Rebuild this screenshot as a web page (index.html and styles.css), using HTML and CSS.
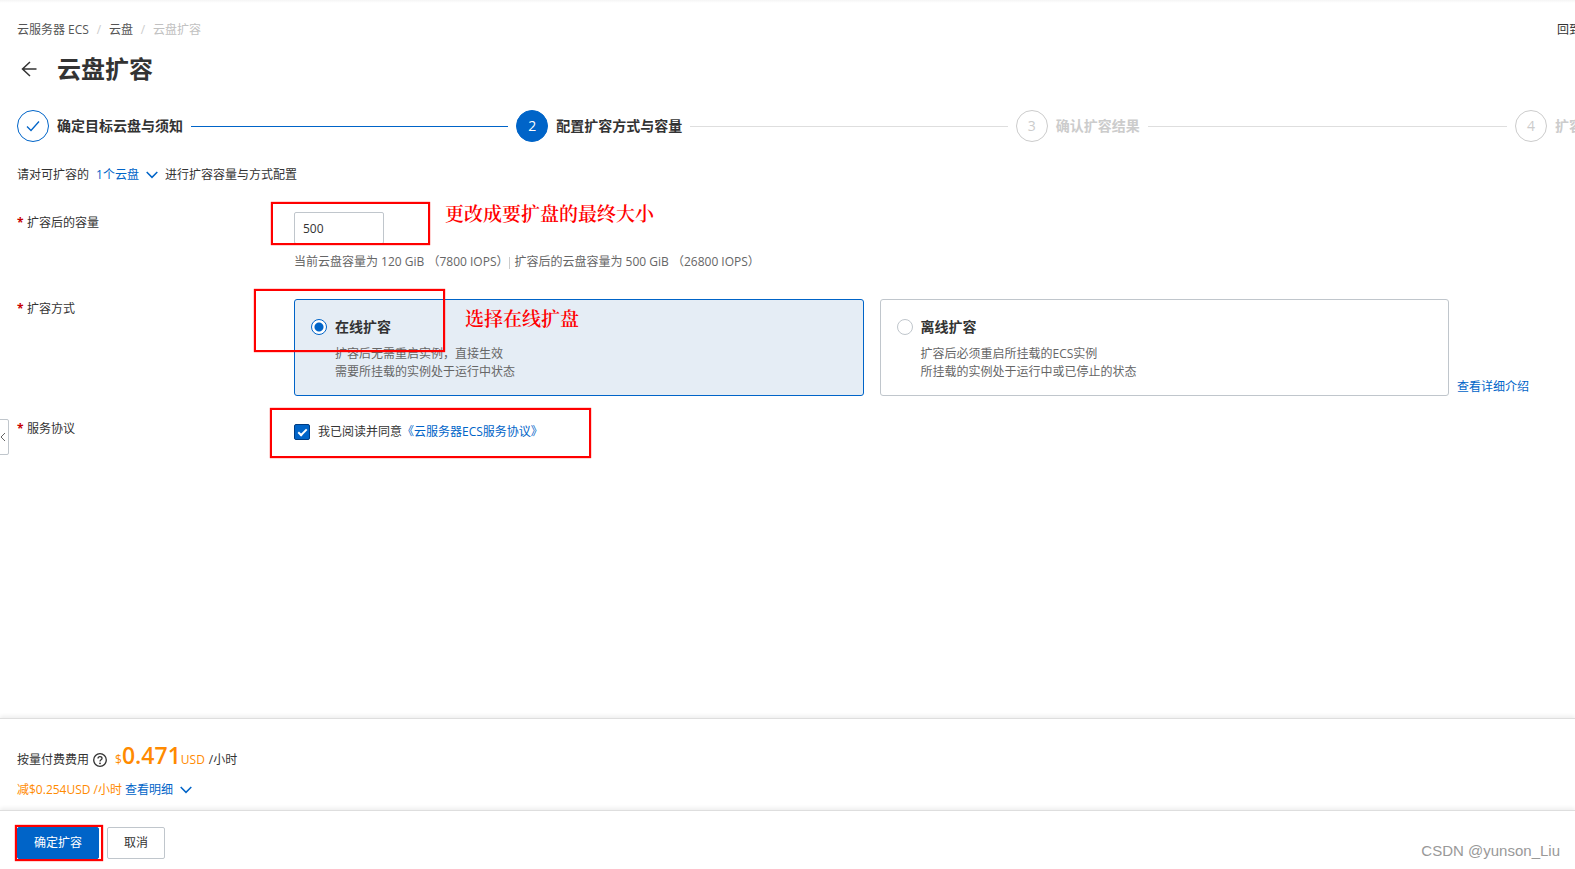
FILE: index.html
```html
<!DOCTYPE html>
<html lang="zh-CN">
<head>
<meta charset="utf-8">
<title>云盘扩容</title>
<link rel="stylesheet" href="styles.css">
</head>
<body>
<button class="drawer-handle" type="button" aria-label="展开">
  <svg width="6" height="10" viewBox="0 0 6 10"><path d="M5 1 1 5l4 4" fill="none" stroke="currentColor"/></svg>
</button>
<main class="page">
  <header class="topbar">
    <nav class="breadcrumb">
      <a href="#">云服务器 ECS</a><span class="slash">/</span><a href="#">云盘</a><span class="slash">/</span><span class="current">云盘扩容</span>
    </nav>
    <a class="old-version" href="#">回到旧版</a>
  </header>
  <div class="title-row">
    <a class="back" href="#" aria-label="返回">
      <svg width="16" height="16" viewBox="0 0 16 16"><path d="M15.5 8H1.5M9 1 1.5 8 9 15" fill="none" stroke="currentColor" stroke-width="1.5"/></svg>
    </a>
    <h1>云盘扩容</h1>
  </div>
  <ol class="steps">
    <li class="step done">
      <span class="dot"><svg width="14" height="12" viewBox="0 0 14 12"><path d="M1 6.5 5 10.5 13 1.5" fill="none" stroke="currentColor" stroke-width="1.3"/></svg></span>
      <span class="step-title">确定目标云盘与须知</span><span class="line"></span>
    </li>
    <li class="step active"><span class="dot">2</span><span class="step-title">配置扩容方式与容量</span><span class="line"></span></li>
    <li class="step"><span class="dot">3</span><span class="step-title">确认扩容结果</span><span class="line"></span></li>
    <li class="step"><span class="dot">4</span><span class="step-title">扩容完成</span></li>
  </ol>
  <p class="intro">请对可扩容的
    <a href="#">1个云盘<svg width="12" height="8" viewBox="0 0 12 8"><path d="M.7 1 6 6.4 11.3 1" fill="none" stroke="currentColor" stroke-width="1.5"/></svg></a>
    进行扩容容量与方式配置</p>
  <form class="form" id="resize">
    <div class="row size-row">
      <label class="label" for="size"><i>*</i>扩容后的容量</label>
      <div class="field">
        <input class="size" id="size" type="text" value="500">
        <p class="hint"><span>当前云盘容量为 120 GiB （7800 IOPS）</span><span class="next">扩容后的云盘容量为 500 GiB （26800 IOPS）</span></p>
        <span class="mark mark-size"></span>
        <span class="note note-size">更改成要扩盘的最终大小</span>
      </div>
    </div>
    <div class="row mode-row">
      <span class="label" id="mode-label"><i>*</i>扩容方式</span>
      <div class="field modes" role="radiogroup" aria-labelledby="mode-label">
        <label class="card selected">
          <input type="radio" name="mode" checked>
          <span class="card-text"><b>在线扩容</b><span>扩容后无需重启实例，直接生效</span><span>需要所挂载的实例处于运行中状态</span></span>
        </label>
        <label class="card">
          <input type="radio" name="mode">
          <span class="card-text"><b>离线扩容</b><span>扩容后必须重启所挂载的ECS实例</span><span>所挂载的实例处于运行中或已停止的状态</span></span>
        </label>
        <a class="more" href="#">查看详细介绍</a>
        <span class="mark mark-mode"></span>
        <span class="note note-mode">选择在线扩盘</span>
      </div>
    </div>
    <div class="row">
      <span class="label"><i>*</i>服务协议</span>
      <div class="field agree">
        <input id="agree" type="checkbox" checked>
        <label for="agree">我已阅读并同意</label><a href="#">《云服务器ECS服务协议》</a>
        <span class="mark mark-agree"></span>
      </div>
    </div>
  </form>
</main>
<footer class="footer">
  <section class="price">
    <p class="price-row">按量付费费用
      <svg class="help" width="14" height="14" viewBox="0 0 14 14"><circle cx="7" cy="7" r="6.3" fill="none" stroke="currentColor" stroke-width="1.3"/><path d="M5 5.6C5 4.3 5.8 3.700 7 3.700s2 .7 2 1.700c0 1.400-2 1.400-2 3" fill="none" stroke="currentColor" stroke-width="1.3"/><circle cx="7" cy="10.300" r=".9" fill="currentColor"/></svg>
      <span class="amount">$<strong>0.471</strong>USD</span><span>/小时</span></p>
    <p class="discount"><span class="amount">减$0.254USD /小时</span>
      <a href="#">查看明细<svg width="12" height="8" viewBox="0 0 12 8"><path d="M.7 1 6 6.4 11.3 1" fill="none" stroke="currentColor" stroke-width="1.5"/></svg></a></p>
  </section>
  <section class="actions">
    <span class="confirm"><button class="btn primary" type="submit" form="resize">确定扩容</button><span class="mark mark-confirm"></span></span>
    <button class="btn" type="button">取消</button>
    <span class="watermark">CSDN @yunson_Liu</span>
  </section>
</footer>
</body>
</html>
```
FILE: styles.css
```css
* { box-sizing: border-box; }
body {
  margin: 0;
  min-height: 100vh;
  display: flex;
  flex-direction: column;
  overflow: hidden;
  background: linear-gradient(#f5f5f5, #fff 3px);
  color: #333;
  font: 12px/18px "Open Sans", "Noto Sans CJK SC", sans-serif;
}
a { color: #0064c8; text-decoration: none; }
p, h1, ol { margin: 0; padding: 0; }
button, input { font: inherit; color: inherit; }

.page { flex: 1; padding: 21px 0 0 17px; }
.topbar { display: flex; justify-content: space-between; white-space: nowrap; }
.breadcrumb { display: flex; }
.breadcrumb a { color: #555; }
.slash { width: 20px; text-align: center; color: #ccc; }
.current { color: #c1c1c1; }
.old-version { width: 18px; overflow: hidden; color: #333; }

.title-row { display: flex; align-items: center; margin-top: 14px; padding-left: 4px; gap: 20px; }
.back { display: flex; color: #333; }
h1 { font-size: 24px; line-height: 32px; font-weight: 700; }

.steps { display: grid; grid-template-columns: 1fr 1fr 1fr 60px; margin-top: 25px; list-style: none; }
.step { display: flex; align-items: center; gap: 8px; min-width: 0; padding-right: 8px; font-size: 14px; color: #ccc; white-space: nowrap; }
.dot { flex: none; width: 32px; height: 32px; display: flex; align-items: center; justify-content: center; border: 1px solid #ccc; border-radius: 50%; }
.step-title { font-weight: 600; }
.line { flex: 1; height: 1px; background: #dedede; }
.done .dot { border-color: #0064c8; color: #0064c8; }
.done .line { background: #0064c8; }
.done .step-title, .active .step-title { color: #333; }
.active .dot { border-color: #0064c8; background: #0064c8; color: #fff; }

.intro { display: flex; gap: 7px; margin-top: 24px; }
.intro a, .discount a { display: inline-flex; align-items: center; gap: 7px; }

.form { margin-top: 29px; }
.row { display: grid; grid-template-columns: 277px 1fr; }
.label { display: flex; gap: 4px; padding-top: 1px; }
.label i { width: 6px; color: #c80000; font-style: normal; font-weight: 700; }
.field { position: relative; }
.size-row { min-height: 86px; }
.size { display: block; width: 90px; height: 32px; margin-top: -1px; padding: 0 8px; border: 1px solid #c0c6cc; border-radius: 2px; outline: 0; }
.hint { display: flex; margin-top: 9px; color: #666; white-space: nowrap; }
.next { position: relative; padding-left: 6px; }
.next::before { content: ""; position: absolute; left: 0; top: 4px; height: 12px; border-left: 1px solid #ccc; }

.mode-row { margin-bottom: 23px; }
.modes { display: flex; align-items: flex-end; padding-right: 46px; }
.card { flex: 1; display: flex; gap: 8px; margin-right: 16px; padding: 19px 16px 14px; border: 1px solid #c0c6cc; border-radius: 3px; }
.card + .card { margin-right: 8px; }
.card.selected { border-color: #0064c8; background: #e5edf5; }
.card-text { display: flex; flex-direction: column; color: #666; }
.card-text b { margin-bottom: 10px; font-size: 14px; line-height: 16px; font-weight: 700; color: #333; }
input[type="radio"], input[type="checkbox"] { flex: none; appearance: none; width: 16px; height: 16px; margin: 0; border: 1px solid #c0c6cc; background: #fff; }
input[type="radio"] { border-radius: 50%; }
input[type="radio"]:checked { border-color: #0064c8; background: radial-gradient(circle, #0064c8 4px, #fff 5px); }
input[type="checkbox"] { border-radius: 2px; }
input[type="checkbox"]:checked { border-color: #003c82; background: #0064c8; display: grid; place-items: center; }
input[type="checkbox"]:checked::after { content: ""; width: 8px; height: 4px; box-sizing: content-box; width: 7px; height: 3px; border: solid #fff; border-width: 0 0 2px 2px; transform: translateY(-1px) rotate(-45deg); }
.agree { display: flex; align-items: center; padding-top: 4px; }
.agree label { margin-left: 8px; }

.mark { position: absolute; border: 2px solid #f00; box-shadow: 0 0 1px #f00; pointer-events: none; }
.mark-size { left: -23px; top: -11px; width: 159px; height: 43px; }
.mark-mode { left: -40px; top: -10px; width: 191px; height: 63px; }
.mark-agree { left: -24px; top: -11px; width: 321px; height: 50px; }
.mark-confirm { left: -2px; top: -2px; width: 88px; height: 36px; }
.note { position: absolute; color: #f00; font-family: "Liberation Serif", "Noto Serif CJK SC", "Noto Sans CJK SC", serif; font-size: 19px; font-weight: 600; line-height: 24px; white-space: nowrap; }
.note-size { left: 151px; top: -10px; }
.note-mode { left: 171px; top: 9px; }

.drawer-handle { position: absolute; left: -1px; top: 419px; width: 10px; height: 36px; padding: 0; display: flex; align-items: center; border: 1px solid #c0c6cc; border-radius: 0 2px 2px 0; background: #fff; color: #666; }

.price, .actions { border-top: 1px solid #dedede; box-shadow: 0 -2px 4px #eee; padding-left: 17px; }
.price { padding-top: 20px; padding-bottom: 11px; }
.price-row { display: flex; align-items: baseline; gap: 4px; line-height: 32px; }
.price-row .amount { margin-left: 4px; }
.help { align-self: center; margin-top: 4px; }
.amount { color: #ff8a00; }
.amount strong { font-size: 23px; font-weight: 600; }
.discount { display: flex; gap: 3px; margin-top: 5px; line-height: 18px; }
.actions { display: flex; align-items: center; gap: 8px; padding: 16px 15px 10px 17px; }
.confirm { position: relative; display: flex; }
.btn { height: 32px; padding: 0 16px; border: 1px solid #c0c6cc; border-radius: 2px; background: #fff; }
.primary { border-color: #0064c8; background: #0064c8; color: #fff; }
.watermark { align-self: flex-end; margin-left: auto; color: #999; font: 15px/16px "Liberation Sans", sans-serif; }
```
